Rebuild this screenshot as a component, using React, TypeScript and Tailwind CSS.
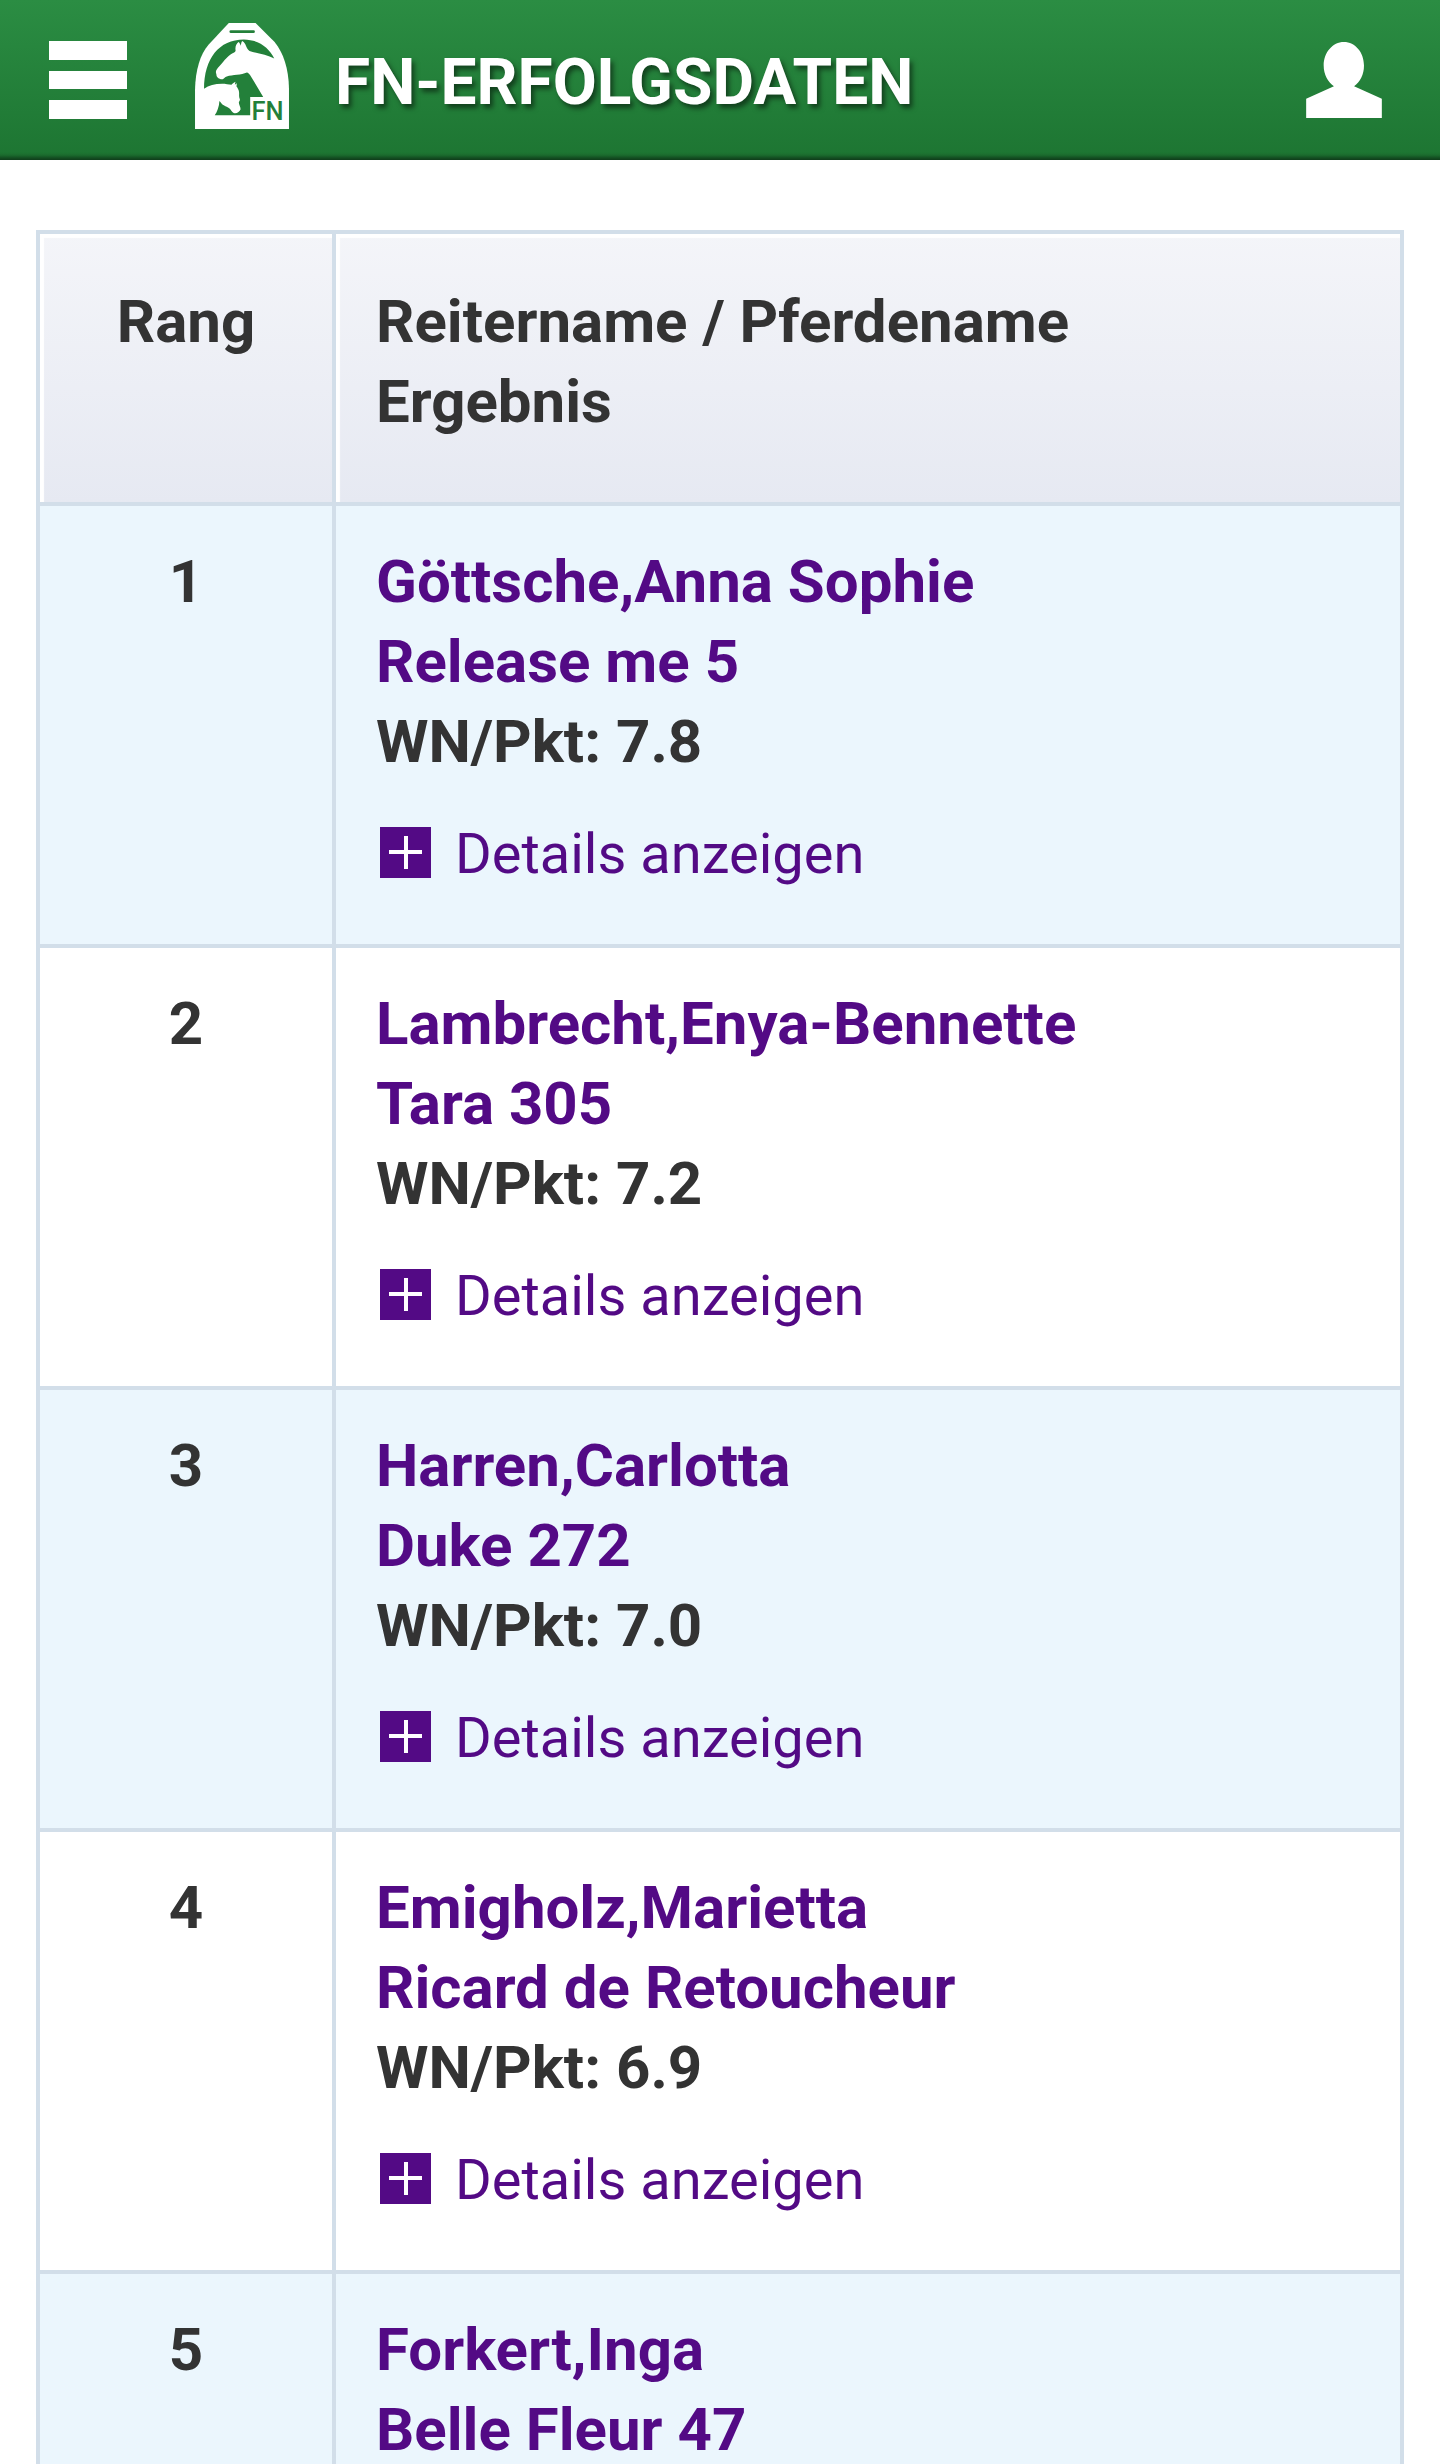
import { useState } from 'react';

interface Result {
  rank: number;
  rider: string;
  horse: string;
  points?: string;
}

const results: Result[] = [
  { rank: 1, rider: 'Göttsche,Anna Sophie', horse: 'Release me 5', points: '7.8' },
  { rank: 2, rider: 'Lambrecht,Enya-Bennette', horse: 'Tara 305', points: '7.2' },
  { rank: 3, rider: 'Harren,Carlotta', horse: 'Duke 272', points: '7.0' },
  { rank: 4, rider: 'Emigholz,Marietta', horse: 'Ricard de Retoucheur', points: '6.9' },
  { rank: 5, rider: 'Forkert,Inga', horse: 'Belle Fleur 47' },
];

function Logo() {
  return (
    <svg viewBox="46 39 281 317" className="h-[106px] w-[94px]" aria-hidden="true">
      {/* Stirrup */}
      <path
        fill="#fff"
        d="M147 39H227L284 96C310 128 326 175 327 235V356H46V240C47 180 61 133 87 103Z"
      />
      <rect x="149" y="61" width="76" height="8" rx="4" fill="#23803a" />
      {/* Opening with mare and foal */}
      <path
        fill="#23803a"
        d="M73 236C73 145 118 88 192 88C238 89 267 113 283 145C262 134 232 130 209 123C203 119 200 111 196 102C193 97 190 94 187 93C184 97 184 103 183 107C181 102 179 98 176 96C170 100 166 109 167 118C168 122 167 125 163 127C146 133 135 150 118 169C111 177 107 182 109 189C111 193 109 197 113 201C118 206 124 208 129 207C134 205 135 201 141 199C158 193 185 195 201 187C205 188 208 191 211 195L250 260H211V315H105C112 304 118 290 119 272C123 276 126 282 132 285C138 290 147 291 151 296C155 302 159 307 164 309C172 310 180 304 182 298C183 291 177 284 177 277C178 273 181 272 180 267C175 256 181 248 175 237C173 233 172 231 170 229L171 219L165 224L167 215C161 218 158 221 155 224C147 223 137 221 127 221C105 221 87 226 73 236Z"
      />
      <text
        x="215"
        y="330"
        fill="#23803a"
        fontSize="76"
        fontWeight="500"
        fontFamily="Roboto, sans-serif"
      >
        FN
      </text>
    </svg>
  );
}

function Header() {
  return (
    <header className="flex h-40 items-center bg-linear-to-b from-[#2b8d43] to-[#1d7532] pr-[58px] pl-[49px] shadow-[inset_0_-8px_4px_-5px_rgba(0,0,0,0.5)]">
      <button type="button" aria-label="Menü" className="flex flex-col gap-[11px]">
        <span className="h-[19px] w-[78px] bg-white" />
        <span className="h-[18px] w-[78px] bg-white" />
        <span className="h-[19px] w-[78px] bg-white" />
      </button>
      <a href="#" aria-label="Startseite" className="mb-2 ml-[68px]">
        <Logo />
      </a>
      <h1 className="mt-1.5 ml-[46px] text-[64px] leading-none font-bold text-white [text-shadow:3px_4px_5px_rgba(0,0,0,0.5)]">
        FN-ERFOLGSDATEN
      </h1>
      <button type="button" aria-label="Anmelden" className="ml-auto">
        <svg viewBox="198 125 229 230" className="size-[76px]" fill="#fff" aria-hidden="true">
          <path d="M312 125C347 125 373 157 373 196C373 224 361 246 343 259L427 297V355H198V297L282 259C264 246 251 224 251 196C251 157 278 125 312 125Z" />
        </svg>
      </button>
    </header>
  );
}

function DetailsButton() {
  const [open, setOpen] = useState(false);

  return (
    <button
      type="button"
      aria-expanded={open}
      onClick={() => setOpen(!open)}
      className="mt-8 ml-1 flex items-center gap-6 text-[56px] leading-[80px] font-normal text-[#530a85]"
    >
      <svg viewBox="0 0 51 51" className="mb-1 size-[51px]" aria-hidden="true">
        <rect width="51" height="51" fill="#530a85" />
        <path d="M9 25H42M26 9V42" stroke="#fff" strokeWidth="4" />
      </svg>
      Details anzeigen
    </button>
  );
}

function ResultRow({ result }: { result: Result }) {
  return (
    <tr className="bg-white align-top odd:bg-[#ebf6fd]">
      <td className="border-4 border-[#d2dee9] pt-9 text-center">{result.rank}</td>
      <td className="border-4 border-[#d2dee9] px-10 pt-9 pb-[50px]">
        <a href="#" className="block text-[#530a85]">
          {result.rider}
        </a>
        <a href="#" className="block text-[#530a85]">
          {result.horse}
        </a>
        {result.points && (
          <>
            <p>WN/Pkt: {result.points}</p>
            <DetailsButton />
          </>
        )}
      </td>
    </tr>
  );
}

export default function App() {
  return (
    <div className="h-screen overflow-hidden bg-white font-[Roboto,sans-serif] text-[#333]">
      <Header />
      <main className="px-9 pt-[70px]">
        <table className="w-full table-fixed border-collapse text-[60px] leading-[80px] font-bold">
          <thead>
            <tr className="bg-linear-to-b from-[#f4f5f9] to-[#e6e9f2] align-top">
              <th className="w-[296px] border-4 border-[#d2dee9] pt-12 shadow-[inset_4px_4px_1px_#fff]">
                Rang
              </th>
              <th className="border-4 border-[#d2dee9] px-10 pt-12 pb-[60px] text-left shadow-[inset_4px_4px_1px_#fff]">
                Reitername / Pferdename
                <br />
                Ergebnis
              </th>
            </tr>
          </thead>
          <tbody>
            {results.map((result) => (
              <ResultRow key={result.rank} result={result} />
            ))}
          </tbody>
        </table>
      </main>
    </div>
  );
}
